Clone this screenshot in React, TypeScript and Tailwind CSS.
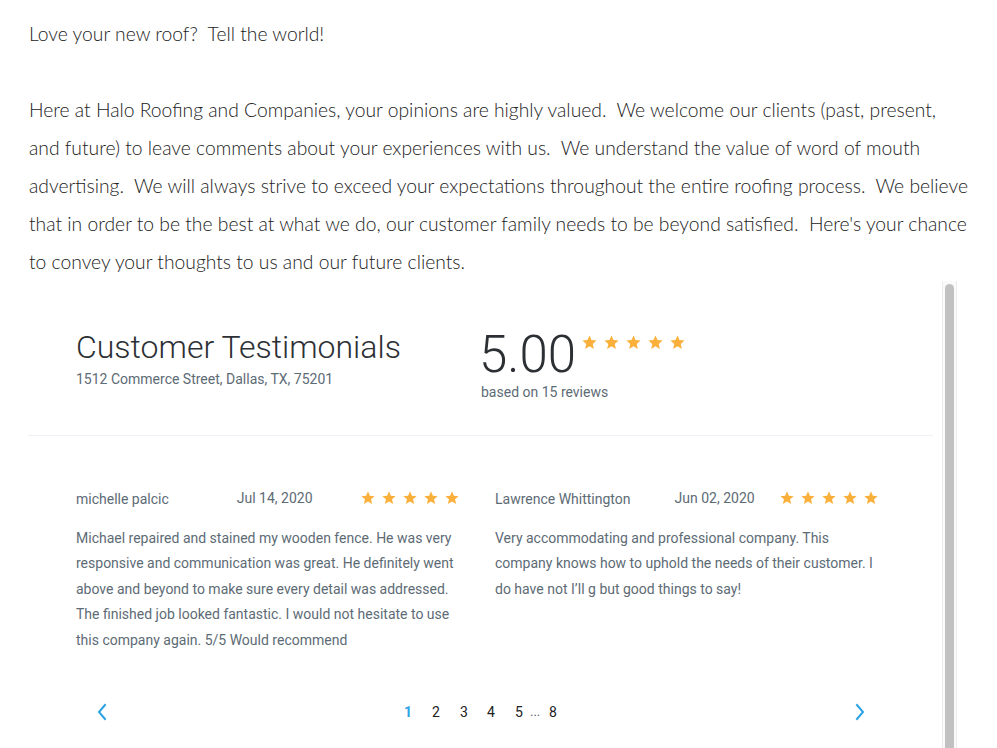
import React from 'react';

const Star = ({ size = 16 }: { size?: number }) => (
    <svg width={size} height={size} viewBox="0 0 24 24" className="shrink-0">
        <path fill="#fbb03b" d="M12 17.27 18.18 21l-1.64-7.03L22 9.24l-7.19-.61L12 2 9.19 8.63 2 9.24l5.46 4.73L5.82 21z" />
    </svg>
);

const Stars = ({ size, gap }: { size: number; gap: string }) => (
    <div className={`flex ${gap}`}>
        {[0, 1, 2, 3, 4].map((i) => (
            <Star key={i} size={size} />
        ))}
    </div>
);

const reviews = [
    {
        name: 'michelle palcic',
        date: 'Jul 14, 2020',
        dateGap: 'ml-[68px]',
        starGap: 'ml-[47px]',
        text: 'Michael repaired and stained my wooden fence. He was very responsive and communication was great. He definitely went above and beyond to make sure every detail was addressed. The finished job looked fantastic. I would not hesitate to use this company again. 5/5 Would recommend',
    },
    {
        name: 'Lawrence Whittington',
        date: 'Jun 02, 2020',
        dateGap: 'ml-[44px]',
        starGap: 'ml-[24px]',
        text: 'Very accommodating and professional company. This company knows how to uphold the needs of their customer. I do have not I\u2019ll g but good things to say!',
    },
];

const Chevron = ({ dir }: { dir: 'left' | 'right' }) => (
    <svg width="12" height="18" viewBox="0 0 12 18" fill="none">
        <path
            d={dir === 'left' ? 'M9 2 3 9l6 7' : 'M3 2l6 7-6 7'}
            stroke="#2ea3e3"
            strokeWidth="2"
            strokeLinecap="square"
        />
    </svg>
);

const App: React.FC = () => {
    return (
        <div className="w-[997px] h-[748px] overflow-hidden bg-white">
            <div
                className="pl-[29px] pt-[15px] text-[19.3px] leading-[38px] text-[#222] font-light whitespace-pre"
                style={{ fontFamily: 'Lato, "Open Sans", sans-serif' }}
            >
                <div>Love your new roof?  Tell the world!</div>
                <div>&nbsp;</div>
                <div>Here at Halo Roofing and Companies, your opinions are highly valued.  We welcome our clients (past, present,</div>
                <div>and future) to leave comments about your experiences with us.  We understand the value of word of mouth</div>
                <div>advertising.  We will always strive to exceed your expectations throughout the entire roofing process.  We believe</div>
                <div>that in order to be the best at what we do, our customer family needs to be beyond satisfied.  Here's your chance</div>
                <div>to convey your thoughts to us and our future clients.</div>
            </div>

            <div className="flex ml-[28px] h-[467px]" style={{ fontFamily: 'Roboto, sans-serif' }}>
                <div className="w-[905px] flex flex-col">
                    {/* header */}
                    <div className="flex pt-[46px] h-[155px] border-b border-[#eef2f6]">
                        <div className="ml-[48px] w-[405px]">
                            <div className="text-[32px] leading-[40px] font-light text-[#2c3034]">Customer Testimonials</div>
                            <div className="text-[14px] leading-[18px] text-[#5d6b75] mt-[3px]">1512 Commerce Street, Dallas, TX, 75201</div>
                        </div>
                        <div>
                            <div className="flex items-start">
                                <div className="text-[51px] leading-[56px] font-light text-[#2c3034] ml-[-2px]">5.00</div>
                                <div className="mt-[7px] ml-[5px]">
                                    <Stars size={17} gap="gap-[5px]" />
                                </div>
                            </div>
                            <div className="text-[14px] leading-[18px] text-[#5d6b75] mt-0">based on 15 reviews</div>
                        </div>
                    </div>

                    {/* reviews */}
                    <div className="flex pt-[52px] h-[263px]">
                        {reviews.map((r, i) => (
                            <div key={i} className={`${i === 0 ? 'ml-[48px]' : 'ml-[29px]'} w-[390px]`}>
                                <div className="flex items-center h-[20px] text-[14px] text-[#5d6b75]">
                                    <span className="mt-[3px]">{r.name}</span>
                                    <span className={`${r.dateGap} mt-[1px]`}>{r.date}</span>
                                    <div className={r.starGap}>
                                        <Stars size={16} gap="gap-[5px]" />
                                    </div>
                                </div>
                                <p className="mt-[18px] text-[14px] leading-[25.4px] text-[#5d6b75]">{r.text}</p>
                            </div>
                        ))}
                    </div>

                    {/* pagination */}
                    <div className="flex items-center h-[26px] text-[14px] text-[#222]">
                        <div className="ml-[68px]">
                            <Chevron dir="left" />
                        </div>
                        <div className="flex items-center ml-[296px]">
                            <span className="text-[#2ea3e3] font-bold w-[28px]">1</span>
                            <span className="w-[28px]">2</span>
                            <span className="w-[27px]">3</span>
                            <span className="w-[28px]">4</span>
                            <span className="w-[15px]">5</span>
                            <span className="text-[#5d6b75] w-[19px] text-[13px]">...</span>
                            <span>8</span>
                        </div>
                        <div className="ml-[297px]">
                            <Chevron dir="right" />
                        </div>
                    </div>
                </div>
                <div className="ml-[9px] w-[15px] h-full border-x border-[#ececec] bg-[#fafafa] pt-[3px] flex justify-center">
                    <div className="w-[9px] h-full rounded-t-full bg-[#c1c1c1]" />
                </div>
            </div>
        </div>
    );
};

export default App;
